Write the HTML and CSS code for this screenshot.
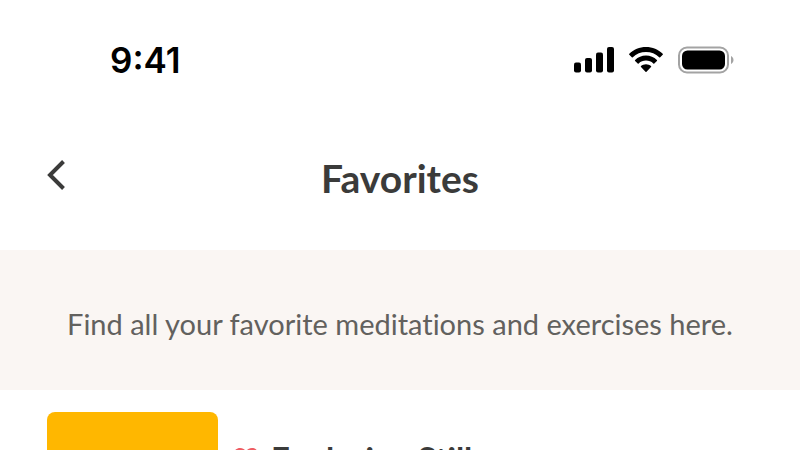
FILE: index.html
```html
<!DOCTYPE html>
<html lang="en">
<head>
<meta charset="utf-8">
<meta name="viewport" content="width=device-width, initial-scale=1">
<title>Favorites</title>
<link rel="stylesheet" href="styles.css">
</head>
<body>
<div class="status">
  <time class="clock">9:41</time>
  <div class="indicators">
    <svg class="signal" width="40" height="26" viewBox="0 0 40 26" aria-hidden="true">
      <rect x="0" y="15.500" width="7" height="10" rx="2"/>
      <rect x="11" y="11" width="7" height="14.500" rx="2"/>
      <rect x="22" y="5.500" width="7" height="20" rx="2"/>
      <rect x="33" y="0" width="7" height="25.500" rx="2"/>
    </svg>
    <svg class="wifi" width="34" height="26" viewBox="0 0 34 26" aria-hidden="true">
      <path d="M17 0C23.500 0 29.400 2.500 33.700 6.700Q34.200 7.200 33.700 7.700L31.200 10.200Q30.700 10.700 30.200 10.200C26.700 6.900 22.100 5.100 17 5.100S7.300 6.900 3.800 10.200Q3.300 10.700 2.800 10.200L.3 7.700Q-.2 7.200 .3 6.700C4.600 2.500 10.500 0 17 0Z"/>
      <path d="M17 8.600C21.200 8.600 25 10.200 27.900 12.900Q28.400 13.400 27.900 13.900L25.300 16.400Q24.800 16.900 24.300 16.400C22.300 14.600 19.800 13.600 17 13.600S11.700 14.600 9.700 16.400Q9.200 16.900 8.700 16.400L6.100 13.900Q5.600 13.400 6.100 12.900C9 10.200 12.800 8.600 17 8.600Z"/>
      <path d="M17 17.200C18.900 17.200 20.700 17.900 22 19.100Q22.500 19.600 22 20.100L17.500 24.700Q17 25.200 16.500 24.700L12 20.100Q11.500 19.600 12 19.100C13.300 17.900 15.100 17.200 17 17.200Z"/>
    </svg>
    <svg class="battery" width="56" height="28" viewBox="0 0 56 28" aria-hidden="true">
      <rect class="shell" x="1" y="1.500" width="49" height="25" rx="8"/>
      <rect x="4" y="4.500" width="43" height="19" rx="5.500"/>
      <path class="cap" d="M53 10C56.300 11.500 56.300 16.500 53 18Z"/>
    </svg>
  </div>
</div>
<header class="bar">
  <button class="back" type="button" aria-label="Back">
    <svg width="20" height="32" viewBox="0 0 20 32" aria-hidden="true"><path d="M17.500 2.500L4 16L17.500 29.500"/></svg>
  </button>
  <h1>Favorites</h1>
</header>
<p class="intro">Find all your favorite meditations and exercises here.</p>
<main class="list">
  <article class="item">
    <div class="thumb"></div>
    <div class="title">
      <svg width="26" height="23" viewBox="0 0 26 23" aria-hidden="true"><path d="M13 22C8 18 1 13 1 7C1 3.300 3.700 1 7 1C9.700 1 12 2.300 13 4.300C14 2.300 16.300 1 19 1C22.300 1 25 3.300 25 7C25 13 18 18 13 22Z"/></svg>
      <h2>Exploring Stillness</h2>
    </div>
  </article>
</main>
</body>
</html>
```
FILE: styles.css
```css
* {
  box-sizing: border-box;
}

body {
  margin: 0;
  overflow: hidden;
  background: #fff;
  color: #3b3b3a;
  font-family: Lato, "Liberation Sans", sans-serif;
  font-variant-ligatures: none;
}

h1,
h2,
p {
  margin: 0;
}

.status {
  display: flex;
  align-items: center;
  justify-content: space-between;
  height: 120px;
  padding: 0 66px 0 110px;
  color: #000;
}

.clock {
  font: 600 35px/40px Inter, sans-serif;
}

.indicators {
  display: flex;
  align-items: center;
  gap: 15px;
}

.shell {
  fill: none;
  stroke: #a3a3a3;
  stroke-width: 2;
}

.cap {
  fill: #a3a3a3;
}

.bar {
  display: grid;
  grid-template-columns: 40px 1fr 40px;
  align-items: center;
  height: 130px;
  padding: 0 44px 14px;
}

.back {
  display: flex;
  height: 48px;
  align-items: center;
  margin-bottom: 6px;
  padding: 0 2px;
  border: 0;
  background: none;
  color: inherit;
}

.back path {
  fill: none;
  stroke: currentColor;
  stroke-width: 4;
}

h1 {
  font-size: 39px;
  line-height: 48px;
  text-align: center;
}

.intro {
  padding: 56px 24px 48px;
  background: #faf6f3;
  color: #62615e;
  font-size: 29px;
  line-height: 36px;
  text-align: center;
}

.list {
  padding: 22px 47px;
}

.item {
  display: flex;
  gap: 15px;
}

.thumb {
  width: 171px;
  height: 171px;
  border-radius: 8px;
  background: #ffb700;
}

.title {
  display: flex;
  align-items: center;
  gap: 12px;
  height: 36px;
  margin-top: 28px;
}

.title path {
  fill: #ee5c62;
}

h2 {
  font-size: 33px;
  line-height: 36px;
}
```
